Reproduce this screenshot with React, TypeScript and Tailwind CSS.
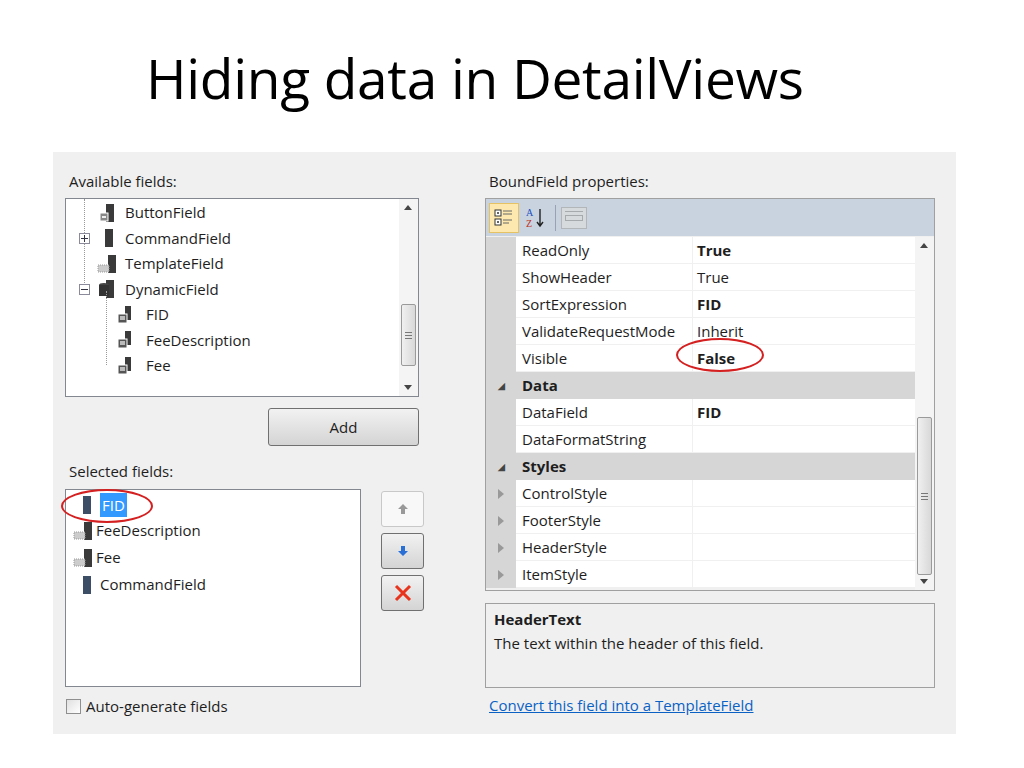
import React from "react";

const F = { fontFamily: '"Open Sans","Noto Sans",sans-serif' };

function FieldIcon({ kind }: { kind: string }) {
  return (
    <svg width="22" height="20" viewBox="0 0 22 20" className="shrink-0">
      {kind === "cmd" && <rect x="9" y="1" width="8" height="18" fill="#3a3a3a" />}
      {kind === "cmdsel" && <rect x="7" y="1" width="8" height="18" fill="#3c4e66" />}
      {kind === "btn" && (<><rect x="10" y="1" width="8" height="18" fill="#3a3a3a" /><rect x="4" y="10" width="8" height="8" fill="#888" stroke="#fff" /><rect x="6" y="13" width="4" height="2" fill="#eee" /></>)}
      {kind === "tpl" && (<><rect x="12" y="1" width="8" height="18" fill="#3a3a3a" /><rect x="2" y="11" width="11" height="7" fill="#ccc" stroke="#999" strokeDasharray="1 1" /></>)}
      {kind === "dyn" && (<><rect x="10" y="1" width="8" height="18" fill="#3a3a3a" /><ellipse cx="8" cy="6" rx="5" ry="2" fill="#444" /><rect x="3" y="6" width="10" height="11" fill="#333" /></>)}
      {kind === "sub" && (<><rect x="11" y="1" width="6" height="14" fill="#3a3a3a" /><rect x="4" y="9" width="9" height="9" fill="#555" stroke="#fff" /><rect x="6" y="11" width="5" height="4" fill="#bbb" /></>)}
    </svg>
  );
}

function Scroll({ thumbTop, thumbH }: { thumbTop: number; thumbH: number }) {
  return (
    <div className="relative w-[19px] h-full bg-[#f4f4f4] shrink-0">
      <div className="absolute top-[6px] left-[5px] w-0 h-0 border-l-[4px] border-r-[4px] border-b-[5px] border-l-transparent border-r-transparent border-b-[#444]" />
      <div className="absolute bottom-[6px] left-[5px] w-0 h-0 border-l-[4px] border-r-[4px] border-t-[5px] border-l-transparent border-r-transparent border-t-[#444]" />
      <div style={{ top: thumbTop, height: thumbH }} className="absolute left-[2px] w-[15px] rounded-[2px] border border-[#9a9a9a] bg-gradient-to-r from-[#f0f0f0] to-[#d8d8d8] flex items-center justify-center">
        <div className="flex flex-col gap-[2px]"><div className="w-[7px] h-px bg-[#777]" /><div className="w-[7px] h-px bg-[#777]" /><div className="w-[7px] h-px bg-[#777]" /></div>
      </div>
    </div>
  );
}

const rows: [string, string, boolean][] = [
  ["ReadOnly", "True", true], ["ShowHeader", "True", false], ["SortExpression", "FID", true],
  ["ValidateRequestMode", "Inherit", false], ["Visible", "False", true],
];

function Exp({ sign }: { sign?: string }) {
  return (
    <span className="w-[12px] flex items-center justify-center shrink-0">
      {sign && <span className="w-[11px] h-[11px] border border-[#8a8a9a] bg-white z-10 flex items-center justify-center"><span className="relative w-[7px] h-[7px] flex items-center justify-center"><span className="absolute w-[7px] h-px bg-[#334]" />{sign === "+" && <span className="absolute w-px h-[7px] bg-[#334]" />}</span></span>}
    </span>
  );
}

export default function App() {
  return (
    <div className="w-[1024px] h-[768px] bg-white relative" style={F}>
      <div className="pl-[146px] pt-[40px] h-[152px] text-[55px] leading-[75px] text-black" style={{ fontFamily: '"Open Sans",sans-serif', letterSpacing: "-0.3px" }}>Hiding data in DetailViews</div>
      <div className="ml-[53px] w-[903px] h-[582px] bg-[#f0f0f0] flex text-[15px] text-[#1e1e1e] relative">
        <div className="w-[430px] pl-[12px] pt-[18px]">
          <div className="h-[28px] pl-[4px]">Available fields:</div>
          <div className="w-[354px] h-[199px] border border-[#828790] bg-white flex">
            <div className="flex-1 relative pl-[12px] pt-[1px] leading-[25.5px]">
              <div className="absolute left-[18px] top-0 h-[92px] border-l border-dotted border-[#999]" />
              <div className="absolute left-[40px] top-[92px] h-[74px] border-l border-dotted border-[#999]" />
              <div className="flex items-center"><Exp /><span className="w-[6px]" /><FieldIcon kind="btn" /><span className="ml-[7px]">ButtonField</span></div>
              <div className="flex items-center"><Exp sign="+" /><span className="w-[6px]" /><FieldIcon kind="cmd" /><span className="ml-[7px]">CommandField</span></div>
              <div className="flex items-center"><Exp /><span className="w-[6px]" /><FieldIcon kind="tpl" /><span className="ml-[7px]">TemplateField</span></div>
              <div className="flex items-center"><Exp sign="-" /><span className="w-[6px]" /><FieldIcon kind="dyn" /><span className="ml-[7px]">DynamicField</span></div>
              {["FID", "FeeDescription", "Fee"].map((t) => (
                <div key={t} className="flex items-center pl-[36px]"><FieldIcon kind="sub" /><span className="ml-[10px]">{t}</span></div>
              ))}
            </div>
            <Scroll thumbTop={105} thumbH={62} />
          </div>
          <div className="flex justify-end w-[354px] mt-[11px]">
            <div className="w-[151px] h-[38px] rounded-[3px] border border-[#707070] bg-gradient-to-b from-[#f2f2f2] to-[#d4d4d4] flex items-center justify-center">Add</div>
          </div>
          <div className="h-[43px] pt-[14px] pl-[4px]">Selected fields:</div>
          <div className="flex">
            <div className="w-[296px] h-[198px] border border-[#828790] bg-white pt-[3px] pl-[6px] leading-[27px]">
              <div className="flex items-center gap-[2px]"><span className="w-[2px]" /><FieldIcon kind="cmdsel" /><span className="bg-[#3399ff] text-white px-[2px] leading-[24px]">FID</span></div>
              <div className="flex items-center gap-[2px]"><FieldIcon kind="tpl" />FeeDescription</div>
              <div className="flex items-center gap-[2px]"><FieldIcon kind="tpl" />Fee</div>
              <div className="flex items-center gap-[2px]"><span className="w-[2px]" /><FieldIcon kind="cmdsel" />CommandField</div>
            </div>
            <div className="ml-[20px] flex flex-col gap-[6px] pt-[2px]">
              <div className="w-[43px] h-[36px] rounded-[3px] border border-[#c8c8c8] bg-[#f8f8f8] flex items-center justify-center"><svg width="12" height="12" viewBox="0 0 12 12"><path d="M6 1L11 6H8V11H4V6H1Z" fill="#999" /></svg></div>
              <div className="w-[43px] h-[36px] rounded-[3px] border border-[#707070] bg-gradient-to-b from-[#f2f2f2] to-[#d4d4d4] flex items-center justify-center"><svg width="12" height="12" viewBox="0 0 12 12"><path d="M4 1H8V6H11L6 11L1 6H4Z" fill="#2a6fd6" /></svg></div>
              <div className="w-[43px] h-[36px] rounded-[3px] border border-[#707070] bg-gradient-to-b from-[#f2f2f2] to-[#d4d4d4] flex items-center justify-center"><svg width="20" height="20" viewBox="0 0 20 20"><path d="M3 3L17 17M17 3L3 17" stroke="#e8341c" strokeWidth="3" /></svg></div>
            </div>
          </div>
          <div className="flex items-center gap-[5px] mt-[8px] pl-[1px]">
            <div className="w-[15px] h-[15px] border border-[#8f8f8f] bg-gradient-to-br from-[#e0e0e0] to-white" />Auto-generate fields
          </div>
        </div>
        <div className="pl-[2px] pt-[18px]">
          <div className="h-[28px] pl-[4px]">BoundField properties:</div>
          <div className="w-[450px] h-[393px] border border-[#a0a0a0] bg-[#f0f0f0] flex flex-col">
            <div className="h-[37px] bg-[#c9d3df] flex items-center gap-[3px] px-[3px]">
              <div className="w-[30px] h-[30px] bg-[#fde9b0] border border-[#e5c365] flex items-center justify-center"><svg width="20" height="20" viewBox="0 0 20 20"><rect x="1" y="2" width="6" height="6" fill="#fff" stroke="#333" /><rect x="1" y="11" width="6" height="6" fill="#fff" stroke="#333" /><path d="M3 5h2M4 4v2M3 14h2M4 13v2" stroke="#333" /><path d="M9 3h9M9 6h9M9 12h9M9 15h6" stroke="#666" /></svg></div>
              <div className="w-[28px] h-[30px] flex items-center justify-center"><svg width="22" height="22" viewBox="0 0 22 22"><text x="1" y="9" fontSize="10" fill="#2050c0" fontFamily="Liberation Serif">A</text><text x="1" y="20" fontSize="10" fill="#c03020" fontFamily="Liberation Serif">Z</text><path d="M15 2v16M12 15l3 4 3-4" stroke="#222" fill="none" strokeWidth="1.4" /></svg></div>
              <div className="w-px h-[26px] bg-[#98a3b2] mx-[2px]" />
              <div className="w-[26px] h-[22px] border border-[#aaa] bg-[#ddd] opacity-70 flex flex-col gap-[3px] p-[3px]"><div className="h-px bg-[#999]" /><div className="h-[6px] border border-[#999]" /></div>
            </div>
            <div className="flex flex-1 bg-[#f0f0f0] pt-[1px]">
              <div className="flex-1">
                {rows.map(([n, v, b], i) => (
                  <div key={n} className="flex h-[27px]">
                    <div className="w-[30px] bg-[#d6d6d6]" />
                    <div className="w-[177px] bg-white border-b border-r border-[#f0f0f0] pl-[6px] leading-[26px]">{n}</div>
                    <div className="flex-1 bg-white border-b border-[#f0f0f0] pl-[4px] leading-[26px] relative">
                      <span className={b ? "font-bold" : ""}>{v}</span>
                      {i === 4 && <div className="absolute left-[-17px] top-[-7px] w-[88px] h-[34px] rounded-[50%] border-2 border-[#d42020]" />}
                    </div>
                  </div>
                ))}
                {[["Data", [["DataField", "FID"], ["DataFormatString", ""]]], ["Styles", [["ControlStyle", ""], ["FooterStyle", ""], ["HeaderStyle", ""], ["ItemStyle", ""]]]].map(([cat, items]: any) => (
                  <React.Fragment key={cat}>
                    <div className="flex h-[27px] bg-[#d6d6d6] items-center font-bold"><span className="w-[30px] pl-[12px] text-[9px] text-[#444]">◢</span><span className="pl-[6px]">{cat}</span></div>
                    {items.map(([n, v]: string[]) => (
                      <div key={n} className="flex h-[27px]">
                        <div className="w-[30px] bg-[#d6d6d6] flex items-center pl-[12px]">{cat === "Styles" && <span className="w-0 h-0 border-t-[5px] border-b-[5px] border-l-[6px] border-t-transparent border-b-transparent border-l-[#999]" />}</div>
                        <div className="w-[177px] bg-white border-b border-r border-[#f0f0f0] pl-[6px] leading-[26px]">{n}</div>
                        <div className="flex-1 bg-white border-b border-[#f0f0f0] pl-[4px] leading-[26px] font-bold">{v}</div>
                      </div>
                    ))}
                  </React.Fragment>
                ))}
              </div>
              <Scroll thumbTop={180} thumbH={158} />
            </div>
          </div>
          <div className="w-[450px] h-[85px] mt-[12px] border border-[#a0a0a0] bg-[#f0f0f0] px-[8px] pt-[3px] leading-[24px]">
            <div className="font-bold">HeaderText</div>
            <div>The text within the header of this field.</div>
          </div>
          <div className="mt-[6px] pl-[4px] text-[#0b62c4] underline">Convert this field into a TemplateField</div>
        </div>
        <div className="absolute left-[8px] top-[337px] w-[92px] h-[34px] rounded-[50%] border-2 border-[#d42020]" />
      </div>
    </div>
  );
}
